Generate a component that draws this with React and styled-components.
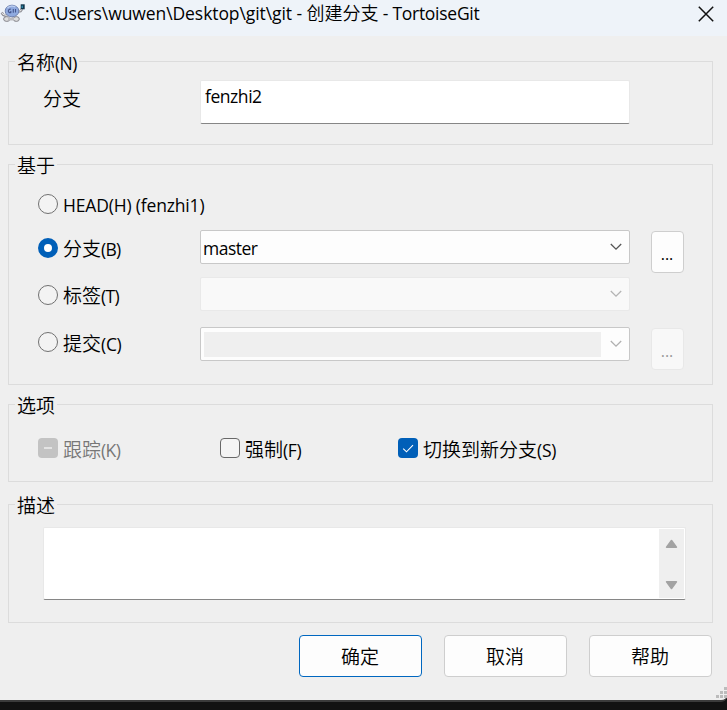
import { useState } from "react";
import styled, { createGlobalStyle } from "styled-components";

const App = () => {
  const [name, setName] = useState("fenzhi2");
  const [base, setBase] = useState("branch");
  const [force, setForce] = useState(false);
  const [switchTo, setSwitchTo] = useState(true);
  const [description, setDescription] = useState("");

  const nameChangeHandler = (event) => {
    setName(event.target.value);
  };

  const descriptionChangeHandler = (event) => {
    setDescription(event.target.value);
  };

  return (
    <Desktop>
      <GlobalStyle />
      <Dialog>
        <TitleBar>
          <TurtleIcon />
          <Title>
            <TitleText $spacing="-0.08px">C:\Users\wuwen\Desktop\git\git -&nbsp;</TitleText>
            创建分支
            <TitleText $spacing="-0.27px">&nbsp;- TortoiseGit</TitleText>
          </Title>
          <CloseButton aria-label="close">
            <svg width="16" height="16" viewBox="0 0 16 16">
              <path d="M0.8 0.8L15.2 15.2M15.2 0.8L0.8 15.2" stroke="#111" strokeWidth="1.5" />
            </svg>
          </CloseButton>
        </TitleBar>

        <Content>
          <Group $height={84} $gap={19}>
            <Legend>
              名称<Latin>(N)</Latin>
            </Legend>
            <NameRow>
              <NameLabel>分支</NameLabel>
              <NameInput value={name} onChange={nameChangeHandler} />
            </NameRow>
          </Group>

          <Group $height={221} $gap={19}>
            <Legend>基于</Legend>
            <BaseRows>
              <BaseRow $height={44}>
                <Option onClick={() => setBase("head")}>
                  <Radio $checked={base === "head"} />
                  <Caption>
                    <Latin $spacing="-0.17px">HEAD(H) (fenzhi1)</Latin>
                  </Caption>
                </Option>
              </BaseRow>
              <BaseRow $height={47}>
                <Option onClick={() => setBase("branch")}>
                  <Radio $checked={base === "branch"} />
                  <Caption>
                    分支<Latin $spacing="-0.8px">(B)</Latin>
                  </Caption>
                </Option>
                <Select>
                  <SelectText>master</SelectText>
                  <Chevron color="#555" />
                </Select>
                <DotsButton>...</DotsButton>
              </BaseRow>
              <BaseRow $height={50}>
                <Option onClick={() => setBase("tag")}>
                  <Radio $checked={base === "tag"} />
                  <Caption>
                    标签<Latin>(T)</Latin>
                  </Caption>
                </Option>
                <Select $disabled>
                  <SelectText />
                  <Chevron color="#b4b4b4" />
                </Select>
              </BaseRow>
              <BaseRow $height={56}>
                <Option $height={30} onClick={() => setBase("commit")}>
                  <Radio $checked={base === "commit"} />
                  <Caption $top={2}>
                    提交<Latin $spacing="-0.3px">(C)</Latin>
                  </Caption>
                </Option>
                <Select>
                  <DisabledField />
                  <Chevron color="#b0b0b0" />
                </Select>
                <DotsButton disabled>...</DotsButton>
              </BaseRow>
            </BaseRows>
          </Group>

          <Group $height={78} $gap={22}>
            <Legend>选项</Legend>
            <CheckRow>
              <CheckOption $disabled>
                <CheckBox $disabled>
                  <svg width="20" height="20" viewBox="0 0 20 20">
                    <path d="M6 10H14" stroke="#ececec" strokeWidth="1.6" />
                  </svg>
                </CheckBox>
                <Caption $top={2}>
                  跟踪<Latin>(K)</Latin>
                </Caption>
              </CheckOption>
              <CheckOption onClick={() => setForce(!force)}>
                <CheckBox $checked={force}>{force && <Tick />}</CheckBox>
                <Caption $top={2}>
                  强制<Latin $spacing="-0.4px">(F)</Latin>
                </Caption>
              </CheckOption>
              <CheckOption onClick={() => setSwitchTo(!switchTo)}>
                <CheckBox $checked={switchTo}>{switchTo && <Tick />}</CheckBox>
                <Caption $top={2}>
                  切换到新分支<Latin $spacing="-0.2px">(S)</Latin>
                </Caption>
              </CheckOption>
            </CheckRow>
          </Group>

          <Group $height={119} $gap={12}>
            <Legend>描述</Legend>
            <DescriptionBox>
              <Description value={description} onChange={descriptionChangeHandler} />
              <ScrollTrack>
                <svg width="13" height="10" viewBox="0 0 13 10">
                  <path d="M6.5 1.6L11.4 8.2H1.6Z" fill="#a3a3a3" stroke="#a3a3a3" strokeWidth="1.6" strokeLinejoin="round" />
                </svg>
                <svg width="13" height="10" viewBox="0 0 13 10">
                  <path d="M6.5 8.4L11.4 1.8H1.6Z" fill="#a3a3a3" stroke="#a3a3a3" strokeWidth="1.6" strokeLinejoin="round" />
                </svg>
              </ScrollTrack>
            </DescriptionBox>
          </Group>

          <Buttons>
            <Button $primary>确定</Button>
            <Button>取消</Button>
            <Button>帮助</Button>
          </Buttons>
        </Content>
        <Grip />
      </Dialog>
    </Desktop>
  );
};

export default App;

const Tick = () => (
  <svg width="20" height="20" viewBox="0 0 20 20">
    <path d="M5.2 10.7L8.5 13.8L15 7.2" fill="none" stroke="#fff" strokeWidth="1.1" />
  </svg>
);

const Chevron = ({ color }) => (
  <svg width="12" height="8" viewBox="0 0 12 8">
    <path d="M0.8 1L6 6.2L11.2 1" fill="none" stroke={color} strokeWidth="1.3" />
  </svg>
);

// small turtle with a phone in its hand
const TurtleIcon = () => (
  <svg width="25" height="23" viewBox="0 0 25 23">
    <path d="M1.6 12.6L3.5 15L6.5 16M18 11.5L20.5 11L22 9" fill="none" stroke="#85858c" strokeWidth="2.6" />
    <path d="M1.9 12.8L3.6 14.6L6.5 15.6M18 11.2L20.5 10.7L21.8 9" fill="none" stroke="#e8e8e8" strokeWidth="1.1" />
    <ellipse cx="6.8" cy="19" rx="3.2" ry="2.4" fill="#ddd" stroke="#85858c" />
    <ellipse cx="16.3" cy="19" rx="3" ry="2.4" fill="#ddd" stroke="#85858c" />
    <path d="M8 16L11 18L14 16V20.5H8Z" fill="#bcbcc0" />
    <ellipse cx="12" cy="11" rx="6.8" ry="5.8" fill="#8faadf" stroke="#6f82b0" />
    <path d="M7.5 8C9.5 5.9 13 5.6 15.3 7" fill="none" stroke="#bed0f2" strokeWidth="1.3" />
    <path d="M10.8 9.2C7.5 8.7 7.5 13.2 10.8 12.6V11M13.3 9V12.7M15.5 9V12.5" fill="none" stroke="#46588f" strokeWidth="1.1" />
    <rect x="20.7" y="4.3" width="4" height="5" fill="#12364c" />
    <rect x="21.5" y="5.6" width="1.5" height="2.4" fill="#2b86a8" />
  </svg>
);

const Grip = () => (
  <GripBox>
    <svg width="12" height="12" viewBox="0 0 12 12" fill="#bcbcbc">
      <path d="M8 0h3v3h-3zM4 4h3v3h-3zM8 4h3v3h-3zM0 8h3v3h-3zM4 8h3v3h-3zM8 8h3v3h-3z" />
    </svg>
  </GripBox>
);

const GlobalStyle = createGlobalStyle`
  * {
    box-sizing: border-box;
  }
  body {
    margin: 0;
    overflow: hidden;
    background-color: #121212;
  }
  body, button, input, textarea {
    font-family: "Noto Sans CJK SC", sans-serif;
    font-weight: 350;
    font-size: 19px;
    color: #000;
  }
  svg {
    display: block;
    flex-shrink: 0;
  }
`;

const Desktop = styled.div`
  height: 710px;
  background-color: #121212;
`;

const Dialog = styled.div`
  position: relative;
  width: 727px;
  height: 702px;
  background-color: #efefef;
  border-bottom: 2px solid #3b3b3b;
  border-bottom-right-radius: 6px;
`;

const TitleBar = styled.header`
  display: flex;
  align-items: flex-start;
  height: 36px;
  background-color: #eef3f9;
`;

const Title = styled.div`
  flex: 1;
  margin-left: 9px;
  line-height: 24px;
  font-size: 18px;
  white-space: nowrap;
`;

const TitleText = styled.span`
  font-family: "Open Sans", sans-serif;
  font-size: 17.5px;
  font-weight: 400;
  letter-spacing: ${(props) => props.$spacing};
`;

const CloseButton = styled.button`
  margin: 6px 13px 0 0;
  padding: 0;
  border: none;
  background: none;
`;

const Content = styled.main`
  padding: 25px 14px 0 8px;
`;

const Group = styled.section`
  height: ${(props) => props.$height}px;
  margin-bottom: ${(props) => props.$gap}px;
  border: 1px solid #dcdcdc;
`;

const Legend = styled.h2`
  width: fit-content;
  height: 24px;
  margin: -12px 0 0 6px;
  padding: 0 2px;
  background-color: #efefef;
  font-size: 19px;
  font-weight: 350;
  line-height: 23px;
  white-space: nowrap;
`;

const Latin = styled.span`
  font-family: "Open Sans", sans-serif;
  font-size: 17.5px;
  font-weight: 400;
  letter-spacing: ${(props) => props.$spacing || "-0.6px"};
`;

const NameRow = styled.div`
  display: flex;
  align-items: flex-start;
  padding: 6px 0 0 34px;
`;

const NameLabel = styled.label`
  width: 157px;
  margin-top: 4px;
  line-height: 28px;
`;

const NameInput = styled.input`
  width: 430px;
  height: 44px;
  padding: 0 5px 13px 4px;
  border: 1px solid #e8e8e8;
  border-bottom: 1px solid #868686;
  border-radius: 2px;
  background-color: #fff;
  font-family: "Open Sans", sans-serif;
  font-size: 17.5px;
  font-weight: 400;
  letter-spacing: -0.45px;
  outline: none;
`;

const BaseRows = styled.div`
  padding: 9px 0 0 29px;
`;

const BaseRow = styled.div`
  display: flex;
  align-items: flex-start;
  height: ${(props) => props.$height}px;
`;

const Option = styled.div`
  display: flex;
  align-items: center;
  width: 162px;
  height: ${(props) => props.$height || 36}px;
`;

const Radio = styled.span`
  flex-shrink: 0;
  width: 20px;
  height: 20px;
  border: ${(props) => (props.$checked ? "6px solid #005fb8" : "1px solid #707070")};
  border-radius: 50%;
  background-color: ${(props) => (props.$checked ? "#fff" : "#f3f3f3")};
`;

const Caption = styled.span`
  margin-left: 5px;
  padding-top: ${(props) => props.$top || 0}px;
  line-height: 28px;
  white-space: nowrap;
`;

const Select = styled.div`
  display: flex;
  align-items: center;
  justify-content: space-between;
  width: 430px;
  height: 34px;
  padding: 0 7px 0 3px;
  border: 1px solid ${(props) => (props.$disabled ? "#e9e9e9" : "#c8c8c8")};
  border-radius: 2px;
  background-color: ${(props) => (props.$disabled ? "#f9f9f9" : "#fdfdfd")};
`;

const SelectText = styled.span`
  margin-left: -1px;
  padding-top: 2px;
  font-family: "Open Sans", sans-serif;
  font-size: 17.5px;
  font-weight: 400;
  letter-spacing: -0.5px;
`;

const DisabledField = styled.span`
  width: 397px;
  height: 25px;
  background-color: #efefef;
`;

const DotsButton = styled.button`
  width: 33px;
  height: 42px;
  margin: 1px 0 0 21px;
  padding: 3px 1px 0 0;
  border: 1px solid ${(props) => (props.disabled ? "#e8e8e8" : "#cecece")};
  border-radius: 4px;
  background-color: ${(props) => (props.disabled ? "#f8f8f8" : "#fdfdfd")};
  color: ${(props) => (props.disabled ? "#999" : "#000")};
  font-family: "Open Sans", sans-serif;
  font-size: 16px;
  font-weight: 400;
`;

const CheckRow = styled.div`
  display: grid;
  grid-template-columns: 182px 178px auto;
  padding: 16px 0 0 29px;
`;

const CheckOption = styled.div`
  display: flex;
  align-items: center;
  height: 30px;
  color: ${(props) => (props.$disabled ? "#777" : "#000")};
`;

const CheckBox = styled.span`
  display: flex;
  align-items: center;
  justify-content: center;
  width: 20px;
  height: 20px;
  border: ${(props) => (props.$checked || props.$disabled ? "none" : "1px solid #686868")};
  border-radius: 4px;
  background-color: ${(props) => (props.$disabled ? "#c3c3c3" : props.$checked ? "#005fb8" : "#f4f4f4")};
`;

const DescriptionBox = styled.div`
  display: flex;
  width: 643px;
  height: 73px;
  margin: 10px 0 0 34px;
  border: 1px solid #e8e8e8;
  border-bottom: 1px solid #868686;
  border-radius: 2px;
  background-color: #fff;
`;

const Description = styled.textarea`
  flex: 1;
  padding: 4px;
  border: none;
  background: none;
  outline: none;
  resize: none;
`;

const ScrollTrack = styled.div`
  display: flex;
  flex-direction: column;
  align-items: center;
  justify-content: space-between;
  width: 25px;
  margin: 1px 1px 1px 0;
  padding: 10px 0 8px;
  background-color: #efefef;
`;

const Buttons = styled.footer`
  display: flex;
  justify-content: flex-end;
  gap: 22px;
  margin-right: 1px;
`;

const Button = styled.button`
  width: 123px;
  height: 42px;
  padding: 0 1px 2px 0;
  border: 1px solid ${(props) => (props.$primary ? "#0067c0" : "#cecece")};
  border-radius: 4px;
  background-color: #fdfdfd;
`;

const GripBox = styled.div`
  position: absolute;
  right: -1px;
  bottom: 1px;
`;
